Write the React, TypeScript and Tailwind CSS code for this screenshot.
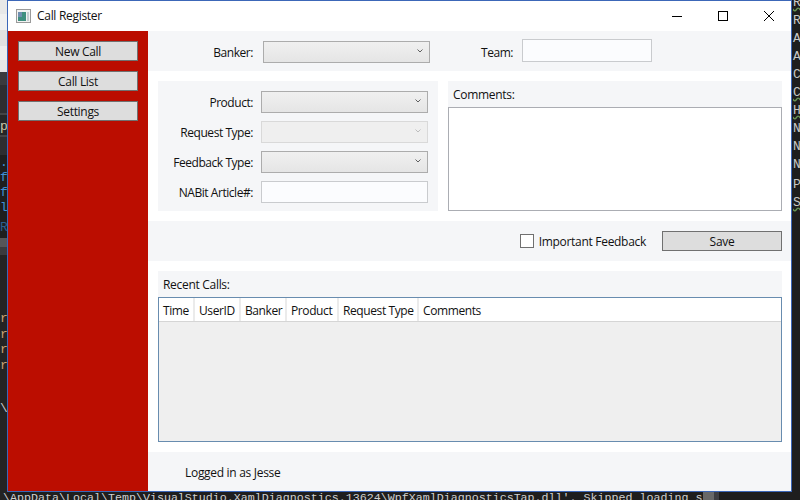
const FONT = "font-['Open_Sans','Noto_Sans',sans-serif]";

const sideItems = ['New Call', 'Call List', 'Settings'];
const columns = [
  { label: 'Time', width: 'w-[36px]' },
  { label: 'UserID', width: 'w-[46px]' },
  { label: 'Banker', width: 'w-[46px]' },
  { label: 'Product', width: 'w-[52px]' },
  { label: 'Request Type', width: 'w-[80px]' },
];
const rightLetters = [
  { letter: 'R', squiggle: true },
  { letter: 'R' },
  { letter: 'A' },
  { letter: 'A' },
  { letter: 'C' },
  { letter: 'C', squiggle: true },
  { letter: 'H', squiggle: true },
  { letter: 'N' },
  { letter: 'N' },
  { letter: 'N' },
  { letter: 'P', gap: true },
  { letter: 'S', squiggle: true },
];
const leftBands = [
  'h-[14px] bg-[#e8e8e8]',
  'h-[16px] bg-[#f0f0f0]',
  'h-[16px] bg-[#e2e2e2]',
  'h-[14px] bg-[#eeeeee]',
  'h-[12px] bg-[#e6e6e6]',
  'h-[13px] bg-[#3a3a3d]',
  'h-[28px] bg-[#2d2d30]',
  'h-[2px] bg-[#444446]',
  'h-[20px] bg-[#252526]',
  'h-[2px] bg-[#444446]',
  'h-[18px] bg-[#2d2d30]',
  'h-[83px] bg-[#1e1e1e]',
  'h-[9px] bg-[#555558]',
  'h-[8px] bg-[#3a3a3d]',
  'h-[245px] bg-[#232323]',
];

const Label = ({ children, width }: { children: string; width: string }) => (
  <span className={`${width} shrink-0 pt-[2px] text-right text-[12px] tracking-[-0.45px] text-[#111]`}>{children}</span>
);

const Combo = ({ disabled, width }: { disabled?: boolean; width: string }) => (
  <div
    className={`${width} h-[22px] flex items-center justify-end pr-[6px] border ${
      disabled
        ? 'border-[#d9d9d9] bg-[#efefef] text-[#bdbdbd]'
        : 'border-[#acacac] bg-gradient-to-b from-[#f0f0f0] to-[#e5e5e5] text-[#606060]'
    }`}
  >
    <svg width="6" height="4" viewBox="0 0 6 4" className="mb-[2px]">
      <path d="M0.5 0.5 L3 3 L5.5 0.5" stroke="currentColor" strokeWidth="1" fill="none" />
    </svg>
  </div>
);

const TextBox = ({ width, height }: { width: string; height: string }) => (
  <div className={`${width} ${height} border border-[#c9cbce] bg-[#fbfcfe]`} />
);

const PushButton = ({ children }: { children: string }) => (
  <button className="w-[120px] h-[20px] pt-[2px] border border-[#707070] bg-[#dddddd] text-[12px] leading-none tracking-[-0.3px] text-[#111]">
    {children}
  </button>
);

export default function App() {
  return (
    <div className={`relative w-[800px] h-[500px] overflow-hidden bg-[#1e1e1e] ${FONT}`}>
      {/* whatever is behind the window */}
      <div className="absolute left-0 top-0 w-[7px] flex flex-col">
        {leftBands.map((band, i) => (
          <div key={i} className={band} />
        ))}
      </div>
      <div className="absolute left-0 top-[120px] text-[13px] leading-none text-[#c8c8a8] font-['Liberation_Mono',monospace]">p</div>
      <div className="absolute left-0 top-[155px] flex flex-col text-[13px] leading-[15px] text-[#3f8fd6] font-['Liberation_Mono',monospace]">
        <span>.</span>
        <span>f</span>
        <span>f</span>
        <span>l</span>
        <span className="text-[#2c5f8f] mt-[5px]">R</span>
      </div>
      <div className="absolute left-0 top-[311px] flex flex-col text-[13px] leading-[15.7px] text-[#c9a070] font-['Liberation_Mono',monospace]">
        <span>r</span>
        <span>r</span>
        <span>r</span>
        <span>r</span>
      </div>
      <div className="absolute left-0 top-[402px] text-[13px] leading-none text-[#c8c8c8] font-['Liberation_Mono',monospace]">\</div>
      <div className="absolute left-[793px] top-[-6px] flex flex-col text-[13px] leading-[18px] text-[#c8c8c8] font-['Liberation_Mono',monospace]">
        {rightLetters.map((item, i) => (
          <span
            key={i}
            className={`${item.squiggle ? 'underline decoration-wavy decoration-[#6a9955]' : ''} ${item.gap ? 'mt-[2px]' : ''}`}
          >
            {item.letter}
          </span>
        ))}
      </div>
      <div className="absolute left-[3px] top-[493px] whitespace-nowrap text-[11.67px] leading-none text-[#d0d0d0] font-['Liberation_Mono',monospace]">
        \AppData\Local\Temp\VisualStudio.XamlDiagnostics.13624\WpfXamlDiagnosticsTap.dll'. Skipped loading s
      </div>
      <div className="absolute left-[703px] top-[492px] flex h-[8px]">
        <div className="w-[11px] bg-[#686868]" />
        <div className="w-[5px] bg-[#3e3e42]" />
      </div>

      {/* app window */}
      <div className="absolute left-[7px] top-0 w-[785px] h-[492px] flex flex-col border border-[#3c67b8] bg-white">
        <div className="h-[30px] shrink-0 flex items-center pl-[8px]">
          <svg width="15" height="14" viewBox="0 0 15 14" className="shrink-0">
            <rect x="0.5" y="0.5" width="14" height="13" fill="#f2f2f2" stroke="#9a9a9a" />
            <rect x="2" y="3" width="8" height="9" fill="#3f8f7f" />
            <rect x="2" y="3" width="4" height="5" fill="#6f8fb0" />
            <rect x="11" y="3" width="2" height="9" fill="#c4ccd0" />
          </svg>
          <span className="ml-[6px] text-[12px] tracking-[-0.3px] text-[#111]">Call Register</span>
          <div className="ml-auto -mr-px flex items-center h-full">
            <div className="w-[46px] flex justify-center">
              <div className="w-[10px] h-px bg-black" />
            </div>
            <div className="w-[46px] flex justify-center">
              <div className="w-[10px] h-[10px] border border-black" />
            </div>
            <div className="w-[46px] flex justify-center">
              <svg width="10" height="10" viewBox="0 0 10 10">
                <path d="M0 0 L10 10 M10 0 L0 10" stroke="black" strokeWidth="1" fill="none" />
              </svg>
            </div>
          </div>
        </div>

        <div className="flex-1 flex min-h-0">
          <div className="w-[140px] shrink-0 bg-[#bb0d00] pt-[10px] pl-[10px] flex flex-col gap-[10px]">
            {sideItems.map((item) => (
              <PushButton key={item}>{item}</PushButton>
            ))}
          </div>

          <div className="flex-1 flex flex-col gap-[10px]">
            <div className="h-[40px] shrink-0 bg-[#f5f6f8] flex items-center pt-[2px]">
              <Label width="w-[105px]">Banker:</Label>
              <div className="ml-[10px]"><Combo width="w-[167px]" /></div>
              <Label width="w-[83px]">Team:</Label>
              <div className="ml-[9px] -mt-[3px]"><TextBox width="w-[130px]" height="h-[23px]" /></div>
            </div>

            <div className="h-[130px] shrink-0 flex gap-[10px] px-[10px] pr-[9px]">
              <div className="w-[280px] shrink-0 bg-[#f5f6f8] pt-[10px] flex flex-col gap-[8px]">
                <div className="flex items-center gap-[8px]">
                  <Label width="w-[95px]">Product:</Label>
                  <Combo width="w-[167px]" />
                </div>
                <div className="flex items-center gap-[8px]">
                  <Label width="w-[95px]">Request Type:</Label>
                  <Combo disabled width="w-[167px]" />
                </div>
                <div className="flex items-center gap-[8px]">
                  <Label width="w-[95px]">Feedback Type:</Label>
                  <Combo width="w-[167px]" />
                </div>
                <div className="flex items-center gap-[8px]">
                  <Label width="w-[95px]">NABit Article#:</Label>
                  <TextBox width="w-[167px]" height="h-[22px]" />
                </div>
              </div>
              <div className="flex-1 bg-[#f5f6f8] flex flex-col">
                <div className="h-[26px] shrink-0 flex items-center pl-[5px] pt-[2px] text-[12px] tracking-[-0.3px] text-[#111]">Comments:</div>
                <div className="flex-1 border border-[#abadb3] bg-white" />
              </div>
            </div>

            <div className="h-[40px] shrink-0 bg-[#f5f6f8] flex items-center justify-end pr-[9px]">
              <div className="w-[14px] h-[14px] border border-[#707070] bg-white" />
              <span className="ml-[5px] pt-[2px] text-[12px] tracking-[-0.3px] text-[#111]">Important Feedback</span>
              <div className="ml-[16px] flex"><PushButton>Save</PushButton></div>
            </div>

            <div className="flex-1 mx-[10px] mr-[9px] bg-[#f5f6f8] flex flex-col min-h-0">
              <div className="h-[26px] shrink-0 flex items-center pl-[5px] pt-[2px] text-[12px] tracking-[-0.3px] text-[#111]">Recent Calls:</div>
              <div className="flex-1 border border-[#688caf] bg-[#efefef] flex flex-col min-h-0">
                <div className="h-[24px] shrink-0 flex bg-white border-b border-[#d5d5d5]">
                  {columns.map((col) => (
                    <div
                      key={col.label}
                      className={`${col.width} shrink-0 flex items-center pl-[4px] pt-[2px] border-r-2 border-[#ebebeb] text-[12px] tracking-[-0.4px] text-[#111] whitespace-nowrap`}
                    >
                      {col.label}
                    </div>
                  ))}
                  <div className="flex items-center pl-[4px] pt-[2px] text-[12px] tracking-[-0.4px] text-[#111]">Comments</div>
                </div>
              </div>
            </div>

            <div className="h-[39px] shrink-0 bg-[#f5f6f8] flex items-center pl-[37px] pt-[2px]">
              <span className="text-[12px] tracking-[-0.3px] text-[#111]">Logged in as Jesse</span>
            </div>
          </div>
        </div>
      </div>
    </div>
  );
}
